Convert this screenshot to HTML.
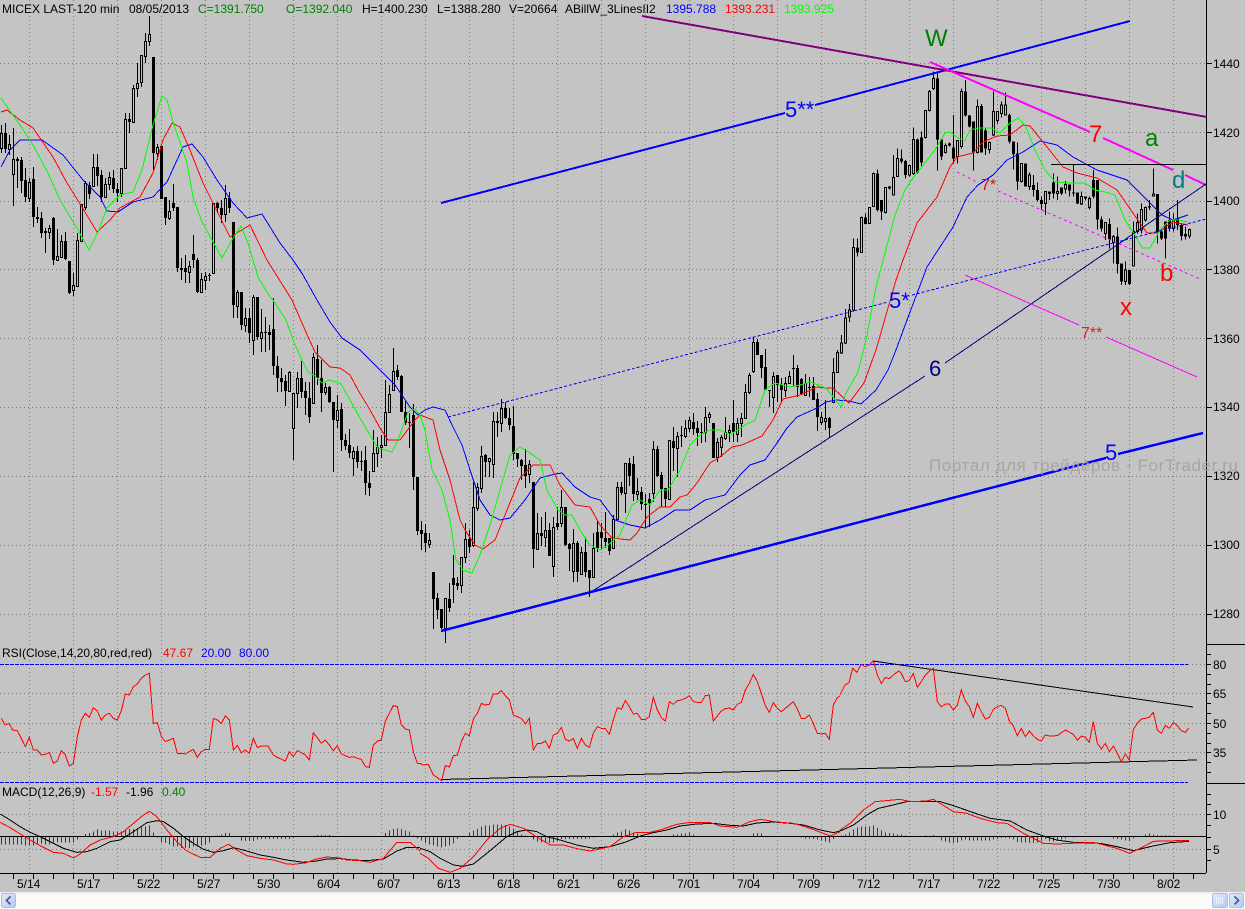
<!DOCTYPE html>
<html><head><meta charset="utf-8"><title>MICEX LAST-120 min</title>
<style>
html,body{margin:0;padding:0;background:#c4c4c4}
svg{display:block;position:absolute;left:0;top:0}
text{font-family:"Liberation Sans",sans-serif;font-size:12px}
</style></head><body>
<svg width="1245" height="909" viewBox="0 0 1245 909" xmlns="http://www.w3.org/2000/svg">
<rect width="1245" height="909" fill="#c4c4c4"/>
<!-- grid -->
<g shape-rendering="crispEdges" fill="none" stroke="#7c7c7c" stroke-dasharray="1 3">
<path d="M29.5 0V873M73.5 0V873M117.5 0V873M161.5 0V873M205.5 0V873M249.5 0V873M293.5 0V873M337.5 0V873M381.5 0V873M425.5 0V873M469.5 0V873M513.5 0V873M557.5 0V873M601.5 0V873M645.5 0V873M689.5 0V873M733.5 0V873M777.5 0V873M821.5 0V873M865.5 0V873M909.5 0V873M953.5 0V873M997.5 0V873M1041.5 0V873M1085.5 0V873M1129.5 0V873M1173.5 0V873"/>
<path d="M0 63.5H1206M0 132.5H1206M0 201.5H1206M0 269.5H1206M0 338.5H1206M0 407.5H1206M0 476.5H1206M0 545.5H1206M0 614.5H1206M0 693.5H1206M0 723.5H1206M0 752.5H1206M0 814.5H1206M0 849.5H1206M1188 664.5H1206"/>
</g>
<!-- candles -->
<g shape-rendering="crispEdges" fill="none">
<path stroke="#000" d="M1.5 125V153M5.5 123V153M9.5 135V155M13.5 128V206M17.5 157V188M21.5 157V193M25.5 168V202M29.5 178V202M33.5 167V227M37.5 207V223M41.5 212V238M45.5 228V253M49.5 225V239M53.5 217V265M57.5 229V261M61.5 235V258M65.5 232V260M69.5 261V294M73.5 273V296M77.5 233V287M81.5 204V241M85.5 181V210M89.5 182V199M93.5 154V186M97.5 154V186M101.5 170V202M105.5 178V198M109.5 172V190M113.5 170V193M117.5 183V202M121.5 168V197M125.5 113V168M129.5 113V133M133.5 85V123M137.5 63V97M141.5 55V87M145.5 33V63M149.5 16V46M153.5 57V170M157.5 144V160M161.5 146V199M165.5 197V225M169.5 200V220M173.5 184V211M177.5 207V272M181.5 258V280M185.5 255V283M189.5 261V283M193.5 235V268M197.5 258V293M201.5 273V293M205.5 272V290M209.5 273V281M213.5 203V273M217.5 202V213M221.5 200V223M225.5 185V222M229.5 192V213M233.5 222V318M237.5 290V318M241.5 292V330M245.5 308V332M249.5 308V343M253.5 295V355M257.5 297V340M261.5 309V352M265.5 317V352M269.5 325V350M273.5 298V375M277.5 356V392M281.5 368V392M285.5 375V406M289.5 371V392M293.5 393V460M297.5 372V408M301.5 361V398M305.5 382V415M309.5 382V423M313.5 353V403M317.5 345V385M321.5 360V412M325.5 383V395M329.5 386V403M333.5 402V472M337.5 395V428M341.5 403V451M345.5 434V450M349.5 429V458M353.5 447V476M357.5 446V468M361.5 451V471M365.5 446V495M369.5 471V496M373.5 430V472M377.5 437V467M381.5 435V458M385.5 380V446M389.5 385V412M393.5 348V391M397.5 365V380M401.5 375V412M405.5 401V425M409.5 413V448M413.5 404V490M417.5 477V535M421.5 521V550M425.5 524V552M429.5 533V548M433.5 572V629M437.5 593V619M441.5 609V629M445.5 598V643M449.5 583V612M453.5 555V603M457.5 577V590M461.5 557V593M465.5 523V563M469.5 530V553M473.5 482V547M477.5 483V511M481.5 446V493M485.5 454V477M489.5 458V477M493.5 412V478M497.5 412V437M501.5 399V432M505.5 402V419M509.5 408V430M513.5 406V460M517.5 453V467M521.5 459V480M525.5 449V488M529.5 460V483M533.5 482V568M537.5 513V550M541.5 517V546M545.5 512V547M549.5 523V556M553.5 517V577M557.5 507V530M561.5 490V527M565.5 507V546M569.5 543V571M573.5 529V582M577.5 541V582M581.5 547V574M585.5 537V577M589.5 570V597M593.5 533V578M597.5 520V552M601.5 523V550M605.5 512V548M609.5 538V555M613.5 515V548M617.5 482V520M621.5 482V495M625.5 463V513M629.5 458V486M633.5 456V501M637.5 478V500M641.5 487V510M645.5 494V528M649.5 493V527M653.5 441V502M657.5 446V477M661.5 472V507M665.5 488V507M669.5 440V500M673.5 427V471M677.5 432V477M681.5 426V447M685.5 420V438M689.5 417V432M693.5 413V435M697.5 421V446M701.5 423V443M705.5 407V442M709.5 412V423M713.5 423V458M717.5 438V462M721.5 435V457M725.5 417V440M729.5 425V442M733.5 400V442M737.5 418V442M741.5 413V437M745.5 384V419M749.5 373V394M753.5 337V373M757.5 339V355M761.5 355V378M765.5 349V390M769.5 390V407M773.5 372V413M777.5 375V402M781.5 378V403M785.5 377V397M789.5 371V383M793.5 355V386M797.5 365V397M801.5 378V395M805.5 374V395M809.5 377V397M813.5 377V400M817.5 393V431M821.5 412V425M825.5 400V430M829.5 417V438M833.5 358V403M837.5 350V373"/>
<path stroke="#000" stroke-width="3" d="M5.5 133V149M17.5 159V161M21.5 160V181M25.5 180V197M33.5 179V217M37.5 217V219M41.5 218V233M45.5 231V233M53.5 218V260M65.5 241V259M69.5 261V293M89.5 185V194M97.5 167V176M101.5 175V197M113.5 178V189M117.5 189V193M129.5 119V122M153.5 57V153M161.5 146V199M165.5 197V218M173.5 203V208M177.5 207V268M181.5 268V270M185.5 268V272M193.5 254V260M197.5 260V292M209.5 275V276M217.5 203V208M221.5 208V215M229.5 198V208M233.5 222V305M241.5 292V325M249.5 318V333M257.5 297V337M265.5 332V333M269.5 332V335M273.5 329V366M277.5 366V378M281.5 378V382M285.5 381V391M301.5 378V392M305.5 391V398M309.5 398V417M317.5 359V378M321.5 378V393M329.5 387V402M333.5 402V420M341.5 409V440M345.5 440V446M349.5 445V453M357.5 451V462M361.5 461V462M365.5 460V483M369.5 483V488M397.5 370V377M401.5 376V412M405.5 412V423M409.5 422V423M413.5 415V477M417.5 477V531M421.5 530V534M425.5 533V543M433.5 572V599M437.5 598V610M441.5 609V628M449.5 599V608M453.5 578V585M457.5 583V586M469.5 539V547M485.5 455V462M497.5 421V423M505.5 408V418M509.5 418V425M513.5 426V454M517.5 453V459M521.5 460V466M525.5 465V476M533.5 482V549M541.5 533V536M549.5 530V556M557.5 523V527M565.5 507V545M569.5 544V549M577.5 543V572M585.5 552V572M589.5 570V578M597.5 532V548M601.5 532V538M605.5 538V542M609.5 538V551M621.5 487V493M629.5 463V476M633.5 464V494M641.5 492V504M645.5 504V505M649.5 499V503M657.5 449V476M661.5 475V489M665.5 488V499M673.5 441V448M681.5 435V436M693.5 422V429M697.5 428V433M701.5 432V433M713.5 423V458M733.5 423V432M757.5 342V355M761.5 355V368M765.5 367V390M769.5 390V391M777.5 375V385M781.5 385V390M793.5 368V369M797.5 368V387M801.5 379V394M809.5 387V388M813.5 386V400M817.5 399V417M829.5 418V428"/>
<path stroke="#000" fill="#c4c4c4" d="M.5 133.5h2V148.5h-2zM8.5 144.5h2V149.5h-2zM12.5 159.5h2V174.5h-2zM28.5 182.5h2V198.5h-2zM48.5 228.5h2V232.5h-2zM56.5 256.5h2V260.5h-2zM60.5 241.5h2V257.5h-2zM72.5 285.5h2V290.5h-2zM76.5 240.5h2V286.5h-2zM80.5 204.5h2V241.5h-2zM84.5 183.5h2V207.5h-2zM92.5 167.5h2V186.5h-2zM104.5 184.5h2V197.5h-2zM108.5 177.5h2V184.5h-2zM120.5 168.5h2V193.5h-2zM124.5 119.5h2V168.5h-2zM132.5 88.5h2V122.5h-2zM136.5 83.5h2V88.5h-2zM140.5 55.5h2V82.5h-2zM144.5 41.5h2V56.5h-2zM148.5 34.5h2V41.5h-2zM156.5 147.5h2V153.5h-2zM168.5 211.5h2V218.5h-2zM188.5 266.5h2V272.5h-2zM200.5 279.5h2V292.5h-2zM204.5 276.5h2V280.5h-2zM212.5 203.5h2V273.5h-2zM224.5 198.5h2V214.5h-2zM236.5 292.5h2V306.5h-2zM244.5 318.5h2V325.5h-2zM252.5 297.5h2V340.5h-2zM260.5 332.5h2V338.5h-2zM288.5 372.5h2V391.5h-2zM292.5 393.5h2V428.5h-2zM296.5 378.5h2V393.5h-2zM312.5 357.5h2V403.5h-2zM324.5 387.5h2V392.5h-2zM336.5 410.5h2V420.5h-2zM352.5 451.5h2V458.5h-2zM372.5 453.5h2V471.5h-2zM376.5 447.5h2V453.5h-2zM380.5 445.5h2V447.5h-2zM384.5 412.5h2V445.5h-2zM388.5 394.5h2V412.5h-2zM392.5 371.5h2V390.5h-2zM428.5 540.5h2V544.5h-2zM444.5 598.5h2V628.5h-2zM460.5 557.5h2V585.5h-2zM464.5 539.5h2V557.5h-2zM472.5 507.5h2V545.5h-2zM476.5 487.5h2V508.5h-2zM480.5 456.5h2V488.5h-2zM488.5 458.5h2V461.5h-2zM492.5 421.5h2V464.5h-2zM500.5 408.5h2V423.5h-2zM528.5 464.5h2V474.5h-2zM536.5 533.5h2V549.5h-2zM544.5 530.5h2V537.5h-2zM552.5 527.5h2V566.5h-2zM560.5 507.5h2V523.5h-2zM572.5 543.5h2V571.5h-2zM580.5 552.5h2V574.5h-2zM592.5 548.5h2V577.5h-2zM612.5 519.5h2V548.5h-2zM616.5 487.5h2V519.5h-2zM624.5 463.5h2V493.5h-2zM636.5 491.5h2V494.5h-2zM652.5 449.5h2V493.5h-2zM668.5 440.5h2V499.5h-2zM676.5 436.5h2V448.5h-2zM684.5 428.5h2V436.5h-2zM688.5 420.5h2V428.5h-2zM704.5 417.5h2V432.5h-2zM708.5 414.5h2V417.5h-2zM716.5 442.5h2V457.5h-2zM720.5 437.5h2V447.5h-2zM724.5 432.5h2V438.5h-2zM728.5 430.5h2V432.5h-2zM736.5 423.5h2V434.5h-2zM740.5 418.5h2V423.5h-2zM744.5 392.5h2V418.5h-2zM748.5 375.5h2V392.5h-2zM752.5 342.5h2V371.5h-2zM772.5 376.5h2V397.5h-2zM784.5 383.5h2V390.5h-2zM788.5 376.5h2V383.5h-2zM804.5 383.5h2V395.5h-2zM820.5 417.5h2V422.5h-2zM824.5 418.5h2V421.5h-2zM832.5 372.5h2V402.5h-2zM836.5 352.5h2V372.5h-2z"/>
<g transform="translate(840.17 0) scale(.33333)">
<path stroke="#000" stroke-width="3" d="M4 1005V1062M16 927V1032M28 912V966M40 715V935M52 715V770M64 650V757M76 640V672M88 622V670M100 518V620M112 508V635M124 600V660M136 562V640M148 558V568M160 465V585M172 445V530M184 448V490M196 480V535M208 497V530M220 382V525M232 415V520M244 395V498M256 330V415M268 270V335M280 215V270M292 215V512M304 418V480M316 430V460M328 427V440M340 345V490M352 420V490M364 265V445M376 240V350M388 345V382M400 365V512M412 298V460M424 312V458M436 385V465M448 425V460M460 275V408M472 335V370M484 305V352M496 278V345M508 340V430M520 425V508M532 428V570M544 490V547M556 490V560M568 518V570M580 525V590M592 548V605M604 590V630M616 575V645M628 575V600M640 520V595M652 530V600M664 563V585M676 543V580M688 553V590M700 495V590M712 577V612M724 575V615M736 590V600M748 590V628M760 510V595M772 540V688M784 650V695M796 668V720M808 655V745M820 705V790M832 682V820M844 790V855M856 785V855M868 810V855M880 665V798M892 640V700M904 610V700M916 620V665M928 600V630M940 505V590M952 582V730M964 690V720M976 665V775M988 635V695M1000 640V695M1012 600V690M1024 670V722M1036 680V718M1048 685V715"/>
<path stroke="#000" stroke-width="9" d="M52 742V758M76 652V672M112 520V630M124 600V635M148 560V565M184 475V485M196 483V525M232 418V518M244 412V488M292 235V418M304 418V470M328 430V437M340 443V475M376 275V347M388 347V380M400 365V458M424 318V458M436 392V445M508 345V425M520 425V462M532 460V545M556 490V560M580 555V570M592 570V600M604 600V612M628 575V582M640 547V580M664 563V580M688 553V572M700 578V580M712 577V610M736 590V595M760 540V590M772 540V658M784 658V685M808 672V718M832 710V792M844 790V845M868 810V852M928 618V622M952 582V695M964 695V715M976 665V715M988 660V685M1012 655V675M1024 675V708M1036 702V710"/>
<path stroke="#000" stroke-width="3" fill="#c4c4c4" d="M1 1029h6V1059h-6zM13 954h6V1029h-6zM25 930h6V951h-6zM37 742h6V930h-6zM61 653h6V757h-6zM85 622h6V670h-6zM97 520h6V620h-6zM133 562h6V637h-6zM157 532h6V585h-6zM169 475h6V530h-6zM205 497h6V525h-6zM217 418h6V520h-6zM253 332h6V412h-6zM265 275h6V332h-6zM277 235h6V265h-6zM313 437h6V458h-6zM349 422h6V470h-6zM361 275h6V440h-6zM409 320h6V458h-6zM445 427h6V448h-6zM457 335h6V405h-6zM469 335h6V362h-6zM481 315h6V340h-6zM493 315h6V345h-6zM541 490h6V545h-6zM565 525h6V560h-6zM613 575h6V610h-6zM649 575h6V580h-6zM673 553h6V567h-6zM721 590h6V612h-6zM745 595h6V622h-6zM793 668h6V700h-6zM817 710h6V727h-6zM853 810h6V845h-6zM877 695h6V798h-6zM889 668h6V695h-6zM901 628h6V690h-6zM913 622h6V660h-6zM937 582h6V588h-6zM997 660h6V685h-6zM1045 688h6V708h-6z"/>
</g>
</g>
<!-- moving averages -->
<g fill="none" stroke-width="1" shape-rendering="crispEdges">
<polyline stroke="#0000ff" points="1,167 10,150 20,140 30,140 42,140 63,155 83,180 100,197 107,211 118,212 133,202 153,197 167,182 183,147 192,144 203,157 217,180 233,203 247,218 262,214 280,243 293,260 303,275 317,300 330,322 342,338 360,350 375,365 395,385 410,407 418,415 425,410 433,407 445,410 452,425 462,445 470,470 480,500 490,515 500,520 510,518 525,500 540,478 555,474 562,473 575,487 590,497 600,500 615,520 630,525 645,528 660,520 675,510 690,510 705,500 725,495 740,475 750,465 765,460 777,443 787,428 797,417 817,408 826,402 836,400 849,401 861,404 876,390 888,370 896,350 907,320 927,267 953,227 967,197 978,185 993,175 1007,160 1023,152 1040,141 1057,145 1073,157 1097,170 1127,180 1147,200 1162,215 1173,220 1188,215"/>
<polyline stroke="#ff0000" points="1,112 7,110 20,120 33,128 53,157 67,183 82,207 97,232 110,220 120,208 140,197 153,173 163,140 172,123 180,127 190,150 203,183 213,203 230,237 250,225 267,260 292,300 305,330 315,352 330,367 340,368 350,375 358,390 370,410 380,428 388,440 400,440 415,420 420,415 433,420 440,450 450,480 460,520 465,530 475,545 483,549 495,540 505,515 520,478 533,465 550,465 560,485 575,505 590,507 600,525 612,538 630,540 637,533 647,517 660,507 670,507 680,497 687,495 697,483 710,463 720,457 732,447 742,445 762,436 773,420 783,399 800,395 817,387 826,388 833,388 849,403 864,383 876,350 888,308 896,280 903,260 917,223 937,197 950,167 957,157 973,153 983,142 997,136 1010,135 1023,125 1030,126 1047,147 1063,167 1077,173 1097,178 1117,190 1133,213 1147,233 1157,233 1173,222 1188,225"/>
<polyline stroke="#00ff00" points="1,98 20,125 33,145 48,173 60,200 78,230 89,250 98,232 107,208 120,195 133,192 142,170 153,125 162,96 167,100 173,122 187,163 193,197 202,222 222,258 232,240 241,226 248,243 258,277 270,297 273,300 286,320 295,345 303,362 308,372 315,376 322,383 330,380 341,384 350,400 360,418 370,435 378,448 392,452 398,440 408,412 415,409 420,415 425,430 432,470 442,490 450,520 456,560 463,570 472,573 480,555 490,525 500,490 510,455 520,447 530,453 540,460 547,490 558,510 565,515 572,515 580,530 590,545 600,550 608,545 620,535 632,505 640,500 650,505 660,490 668,490 680,470 690,445 700,435 710,430 720,430 730,435 745,425 755,420 765,390 772,385 775,383 790,387 800,385 810,382 826,388 841,407 846,393 858,372 866,340 876,287 889,238 895,215 905,190 915,175 925,163 935,150 945,133 950,132 958,138 965,140 970,130 978,128 985,128 992,128 1000,133 1010,123 1018,118 1025,125 1035,150 1045,170 1055,182 1070,183 1085,183 1095,190 1105,192 1115,195 1125,220 1135,235 1142,248 1150,248 1160,230 1170,220 1178,220 1188,222"/>
</g>
<!-- trend lines -->
<g fill="none" shape-rendering="crispEdges">
<path stroke="#0000ff" stroke-width="2" d="M441 203L785 113M815 105L1130 21"/>
<path stroke="#800080" stroke-width="2" d="M642 16L1207 117"/>
<path stroke="#ff00ff" stroke-width="2" d="M930 62L1090 132M1103 138L1173 170M1185 175L1206 185"/>
<path stroke="#000" d="M1051 164.5H1206"/>
<path stroke="#000080" d="M588 594L925 376M945 363L1206 184"/>
<path stroke="#0000ff" stroke-width="2.5" d="M441 631L1106 458M1118 454L1203 433"/>
<path stroke="#0000ff" stroke-dasharray="3 2" d="M448 417L888 302M912 295L1206 219"/>
<path stroke="#ff00ff" stroke-dasharray="3 3" d="M957 172L977 182M998 191L1200 279"/>
<path stroke="#ff00ff" d="M965 275L1079 325M1106 337L1197 377"/>
</g>
<!-- RSI pane -->
<g fill="none" shape-rendering="crispEdges">
<path stroke="#0000ff" stroke-dasharray="4 1" d="M0 664.5H1188M0 782.5H1188"/>
<path stroke="#000" d="M873 661L1193 707M441 779.5L1197 760"/>
<g transform="translate(0 640) scale(.33333)" stroke="#ff0000" stroke-width="3">
<polyline points="4,235 15,255 27,250 38,270 52,272 64,295 76,320 88,292 100,330 112,330 124,345 136,343 148,337 160,370 172,363 184,332 196,345 208,378 220,370 232,290 244,240 256,220 268,232 280,203 292,213 304,240 316,225 328,220 340,235 352,240 364,212 376,162 388,165 400,140 412,132 424,115 436,105 448,100 460,250 472,248 484,290 496,305 508,300 520,295 532,340 544,340 556,342 568,335 580,328 592,352 604,335 616,328 628,328 640,235 652,240 664,250 676,228 688,240 700,330 712,316 724,338 736,330 748,340 760,295 772,323 784,318 804,318 820,345 832,352 856,363 868,335 880,350 892,332 904,338 916,345 928,360 940,278 952,293 964,310 976,300 988,315 1000,332 1012,317 1024,342 1036,347 1048,352 1060,350 1072,355 1084,358 1096,380 1108,382 1120,315 1132,303 1144,300 1156,243 1168,220 1180,197 1192,200 1204,255 1216,267 1228,270 1240,335 1252,370 1260,371"/>
<polyline transform="translate(1260 0)" points="0,370 10,375 25,373 40,405 65,422 76,376 88,381 100,347 112,345 124,305 136,280 148,288 160,237 172,220 184,190 196,195 208,193 220,162 232,162 244,152 256,167 268,180 280,225 292,230 304,235 316,252 328,235 340,330 352,310 364,310 376,303 388,325 400,285 412,280 424,262 436,298 448,303 460,295 472,325 484,295 496,315 508,322 520,280 532,260 544,265 556,265 568,283 580,240 592,203 604,208 616,182 628,200 640,222 652,220 664,238 676,238 688,230 700,172 712,210 724,233 736,243 748,185 760,193 772,182 784,180 796,175 808,167 820,185 832,187 844,187 856,167 868,165 880,243 892,228 904,213 916,206 928,204 940,210 952,193 964,187 976,150 988,130 1000,103 1012,125 1024,160 1036,197 1048,217 1060,188 1072,205 1084,215 1096,205 1108,195 1120,185 1132,207 1144,235 1156,235 1168,225 1180,250 1192,280 1204,282 1216,280 1228,298 1240,195 1252,173 1260,168"/>
<polyline transform="translate(2520 0)" points="0,165 15,135 27,128 38,85 50,97 64,73 76,80 88,75 100,62 112,105 124,130 136,112 148,116 160,105 176,93 184,100 196,125 208,122 220,100 232,142 244,125 256,105 268,93 280,85 292,185 304,200 316,192 328,192 340,210 352,195 364,150 376,183 388,200 400,232 412,190 424,215 436,237 448,232 460,208 472,200 484,196 496,205 508,243 520,258 532,287 544,265 556,290 568,273 580,287 592,298 604,303 616,285 628,288 652,287 676,270 700,283 712,300 724,288 736,292 748,307 760,245 772,310 784,327 796,310 808,335 820,318 832,340 844,365 856,342 868,360 880,268 892,250 904,237 916,235 928,232 940,217 952,270 964,280 976,256 988,265 1000,247 1012,257 1024,272 1036,277 1046,265"/>
</g>
</g>
<!-- MACD pane -->
<g fill="none" shape-rendering="crispEdges" transform="translate(.17 640) scale(.33333)" stroke-width="3">
<path stroke="#006400" d="M4 589v25M16 589v25M28 589v25M40 589v25M52 589v25M64 589v25M76 589v28M88 589v28M100 589v28M112 589v22M124 589v22M136 589v24M148 589v24M160 589v18M172 589v18M184 589v18M196 589v18M208 589v18M220 589v18M232 589v10M256 589v-7M268 589v-10M280 589v-15M292 589v-20M304 589v-18M316 589v-18M328 589v-18M340 589v-15M352 589v-15M364 589v-15M376 589v-18M388 589v-22M400 589v-22M412 589v-25M424 589v-28M436 589v-30M448 589v-32M460 589v-12M472 589v4M484 589v18M496 589v20M508 589v25M520 589v30M532 589v30M544 589v35M556 589v35M568 589v35M580 589v30M592 589v30M604 589v28M616 589v25M628 589v18M640 589v2M652 589v-2M664 589v-6M676 589v-10M688 589v-10M700 589v2M724 589v12M736 589v14M748 589v14M760 589v14M772 589v10M784 589v8M796 589v8M808 589v8M820 589v8M832 589v8M844 589v8M856 589v8M868 589v8M880 589v5M952 589v-4M964 589v-4M976 589v-4M988 589v-4M1156 589v-10M1168 589v-17M1180 589v-22M1192 589v-24M1204 589v-22M1216 589v-18M1228 589v-14M1240 589v-2M1252 589v6"/>
<path stroke="#006400" transform="translate(1260 0)" d="M4 589v12M16 589v20M28 589v25M40 589v28M52 589v30M64 589v33M76 589v30M88 589v28M100 589v22M112 589v8M124 589v2M148 589v-10M160 589v-17M172 589v-22M184 589v-30M196 589v-32M208 589v-33M220 589v-36M232 589v-36M244 589v-36M256 589v-34M268 589v-30M280 589v-22M292 589v-15M304 589v-5M316 589v-3M328 589v2M340 589v10M352 589v16M364 589v18M376 589v18M388 589v20M400 589v18M412 589v15M424 589v8M436 589v8M448 589v8M460 589v8M472 589v8M484 589v8M496 589v8M508 589v6M520 589v3M580 589v-6M592 589v-12M604 589v-15M616 589v-20M628 589v-18M640 589v-12M652 589v-8M664 589v-3M760 589v-5M772 589v-6M784 589v-8M796 589v-8M808 589v-12M820 589v-5M1000 589v-8M1012 589v-10M1024 589v-8M1144 589v4M1156 589v6M1168 589v6M1180 589v8M1192 589v10M1204 589v12M1216 589v15M1228 589v18M1240 589v8M1252 589v-2"/>
<path stroke="#006400" transform="translate(2520 0)" d="M4 589v-3M16 589v-6M28 589v-12M40 589v-20M52 589v-26M64 589v-30M76 589v-30M88 589v-30M100 589v-32M112 589v-25M124 589v-18M136 589v-12M148 589v-10M160 589v-8M172 589v-6M184 589v-5M196 589v-2M256 589v-2M280 589v-4M304 589v12M316 589v15M328 589v18M340 589v20M352 589v18M364 589v12M376 589v10M388 589v12M400 589v12M412 589v12M424 589v12M436 589v13M448 589v13M460 589v10M472 589v8M484 589v5M496 589v5M508 589v6M520 589v10M532 589v17M544 589v18M556 589v18M568 589v20M580 589v20M592 589v18M604 589v14M616 589v8M628 589v14M640 589v16M652 589v14M664 589v10M676 589v6M700 589v3M784 589v2M820 589v6M832 589v8M844 589v10M856 589v12M868 589v14M880 589v6M916 589v-6M928 589v-8M940 589v-6M952 589v-4M964 589v-3M976 589v-2M988 589v-2M1000 589v-2"/>
<path stroke="#000" d="M0 590H3621"/>
<polyline stroke="#000" points="0,522 30,540 60,560 90,577 120,590 150,605 190,625 230,637 260,635 290,625 330,605 360,600 400,575 440,548 470,542 490,545 520,565 550,590 580,610 610,628 640,637 670,632 700,623 740,633 780,645 820,652 860,660 910,667 950,663 980,657 1020,656 1060,660 1100,662 1150,657 1190,633 1220,622 1260,622"/>
<polyline stroke="#ff0000" points="0,547 30,563 60,582 90,600 120,617 160,637 190,640 220,654 240,642 270,615 300,600 340,590 370,575 400,550 430,525 448,514 470,530 500,570 530,605 560,633 600,652 630,652 660,625 685,613 710,630 740,647 780,655 820,660 860,672 880,673 920,668 945,658 980,651 1020,654 1040,660 1080,662 1110,667 1150,655 1190,607 1230,607 1260,633"/>
<polyline stroke="#000" transform="translate(1260 0)" points="0,625 30,635 60,655 100,675 130,679 160,672 200,640 230,615 260,590 290,575 320,570 350,575 380,590 420,600 470,615 520,625 570,620 620,605 660,588 700,578 740,570 780,558 830,552 880,550 930,556 970,558 1010,549 1060,546 1110,550 1150,555 1200,570 1240,578 1260,573"/>
<polyline stroke="#ff0000" transform="translate(1260 0)" points="0,640 25,655 55,685 90,697 120,685 160,650 200,600 240,565 270,553 310,565 340,585 390,615 430,615 470,626 510,633 570,620 610,590 650,577 690,577 720,570 770,553 810,547 870,548 900,558 950,562 990,545 1020,538 1070,546 1120,550 1170,565 1230,588 1260,575"/>
<polyline stroke="#000" transform="translate(2520 0)" points="0,573 40,555 80,525 115,505 150,497 200,485 260,485 300,485 340,497 400,518 450,535 510,543 560,570 610,588 650,600 700,607 780,610 830,620 880,632 930,620 990,608 1046,604"/>
<polyline stroke="#ff0000" transform="translate(2520 0)" points="0,570 30,550 70,510 105,485 180,478 210,485 260,483 280,478 340,515 380,520 420,535 470,548 500,550 550,580 610,610 650,612 760,607 830,625 868,640 900,625 940,604 1046,601"/>
</g>
<!-- axes -->
<g fill="none" stroke="#000" shape-rendering="crispEdges">
<path d="M1206.5 0V873M0 873.5H1206M1206 644.5H1245M1206 783.5H1245"/>
<path d="M1206 63.5h6M1206 132.5h6M1206 201.5h6M1206 269.5h6M1206 338.5h6M1206 407.5h6M1206 476.5h6M1206 545.5h6M1206 614.5h6"/>
<path d="M1206 654.5h5M1206 664.5h5M1206 674.5h5M1206 684.5h5M1206 693.5h5M1206 703.5h5M1206 713.5h5M1206 723.5h5M1206 733.5h5M1206 743.5h5M1206 752.5h5M1206 762.5h5M1206 772.5h5M1206 794.5h5M1206 804.5h5M1206 814.5h5M1206 825.5h5M1206 837.5h5M1206 849.5h5M1206 860.5h5"/>
<path d="M13.5 873v6M33.5 873v6M53.5 873v6M73.5 873v6M93.5 873v6M113.5 873v6M133.5 873v6M153.5 873v6M173.5 873v6M193.5 873v6M213.5 873v6M233.5 873v6M253.5 873v6M273.5 873v6M293.5 873v6M313.5 873v6M333.5 873v6M353.5 873v6M373.5 873v6M393.5 873v6M413.5 873v6M433.5 873v6M453.5 873v6M473.5 873v6M493.5 873v6M513.5 873v6M533.5 873v6M553.5 873v6M573.5 873v6M593.5 873v6M613.5 873v6M633.5 873v6M653.5 873v6M673.5 873v6M693.5 873v6M713.5 873v6M733.5 873v6M753.5 873v6M773.5 873v6M793.5 873v6M813.5 873v6M833.5 873v6M853.5 873v6M873.5 873v6M893.5 873v6M913.5 873v6M933.5 873v6M953.5 873v6M973.5 873v6M993.5 873v6M1013.5 873v6M1033.5 873v6M1053.5 873v6M1073.5 873v6M1093.5 873v6M1113.5 873v6M1133.5 873v6M1153.5 873v6M1173.5 873v6M1193.5 873v6"/>
</g>
<!-- header -->
<text x="2" y="13">MICEX LAST-120 min</text>
<text x="129" y="13">08/05/2013</text>
<text x="198" y="13" fill="#008000">C=1391.750</text>
<text x="286" y="13" fill="#008000">O=1392.040</text>
<text x="362" y="13">H=1400.230</text>
<text x="437" y="13">L=1388.280</text>
<text x="509" y="13">V=20664</text>
<text x="565" y="13">ABillW_3LinesII2</text>
<text x="666" y="13" fill="#0000ff">1395.788</text>
<text x="725" y="13" fill="#ff0000">1393.231</text>
<text x="784" y="13" fill="#00ff00">1393.925</text>
<!-- right axis -->
<text x="1213" y="68">1440</text><text x="1213" y="137">1420</text><text x="1213" y="205">1400</text><text x="1213" y="274">1380</text><text x="1213" y="343">1360</text><text x="1213" y="411">1340</text><text x="1213" y="480">1320</text><text x="1213" y="549">1300</text><text x="1213" y="618">1280</text>
<text x="1213" y="669">80</text><text x="1213" y="698">65</text><text x="1213" y="728">50</text><text x="1213" y="757">35</text><text x="1213" y="819">10</text><text x="1213" y="854">5</text>
<!-- indicators -->
<text x="2" y="657">RSI(Close,14,20,80,red,red)</text>
<text x="163" y="657" fill="#ff0000">47.67</text><text x="201" y="657" fill="#0000ff">20.00</text><text x="239" y="657" fill="#0000ff">80.00</text>
<text x="2" y="796">MACD(12,26,9)</text>
<text x="91" y="796" fill="#ff0000">-1.57</text><text x="126" y="796">-1.96</text><text x="162" y="796" fill="#008000">0.40</text>
<!-- dates -->
<text x="17" y="888">5/14</text><text x="77" y="888">5/17</text><text x="137" y="888">5/22</text><text x="197" y="888">5/27</text><text x="257" y="888">5/30</text><text x="317" y="888">6/04</text><text x="377" y="888">6/07</text><text x="437" y="888">6/13</text><text x="497" y="888">6/18</text><text x="557" y="888">6/21</text><text x="617" y="888">6/26</text><text x="677" y="888">7/01</text><text x="737" y="888">7/04</text><text x="797" y="888">7/09</text><text x="857" y="888">7/12</text><text x="917" y="888">7/17</text><text x="977" y="888">7/22</text><text x="1037" y="888">7/25</text><text x="1097" y="888">7/30</text><text x="1157" y="888">8/02</text>
<!-- labels -->
<g>
<text x="925" y="46" fill="#008000" style="font-size:24px">W</text>
<text x="785" y="117" fill="#0000ff" style="font-size:22px">5**</text>
<text x="889" y="308" fill="#0000ff" style="font-size:22px">5*</text>
<text x="1089" y="142" fill="#ff0000" style="font-size:24px">7</text>
<text x="1145" y="146" fill="#008000" style="font-size:24px">a</text>
<text x="1172" y="188" fill="#008080" style="font-size:24px">d</text>
<text x="1160" y="281" fill="#ff0000" style="font-size:24px">b</text>
<text x="1120" y="315" fill="#ff0000" style="font-size:24px">x</text>
<text x="929" y="376" fill="#000080" style="font-size:22px">6</text>
<text x="1105" y="460" fill="#0000ff" style="font-size:22px">5</text>
<text x="981" y="190" fill="#ff0000" style="font-size:16px">7*</text>
<text x="1081" y="338" fill="#e02020" style="font-size:16px">7**</text>
</g>
<text x="929" y="471" fill="#aca3a3" textLength="309" lengthAdjust="spacing" style="font-size:17px">Портал для трейдеров - ForTrader.ru</text>
<!-- bottom bar -->
<defs><linearGradient id="b" x1="0" y1="0" x2="0" y2="1"><stop offset="0" stop-color="#efeee6"/><stop offset=".2" stop-color="#fcfbf6"/><stop offset="1" stop-color="#fdfdfa"/></linearGradient>
<linearGradient id="c" x1="0" y1="0" x2="1" y2="1"><stop offset="0" stop-color="#e2ebfd"/><stop offset="1" stop-color="#b3c8f5"/></linearGradient></defs>
<rect x="0" y="892" width="1245" height="17" fill="url(#b)"/>
<g shape-rendering="crispEdges">
<rect x="1.5" y="893.5" width="14" height="14" rx="2" fill="url(#c)" stroke="#a9bde8"/>
<path d="M10.5 896.5L6.5 900.5L10.5 904.5" fill="none" stroke="#4d6185" stroke-width="2"/>
<rect x="1212.5" y="893.5" width="15" height="14" rx="2" fill="url(#c)" stroke="#a9bde8"/>
<path d="M1216.5 897v7M1218.5 897v7M1220.5 897v7M1222.5 897v7" stroke="#eef3fe"/>
<rect x="1229.5" y="893.5" width="14" height="14" rx="2" fill="url(#c)" stroke="#a9bde8"/>
<path d="M1234.5 896.5L1238.5 900.5L1234.5 904.5" fill="none" stroke="#4d6185" stroke-width="2"/>
</g>
</svg>
</body></html>
